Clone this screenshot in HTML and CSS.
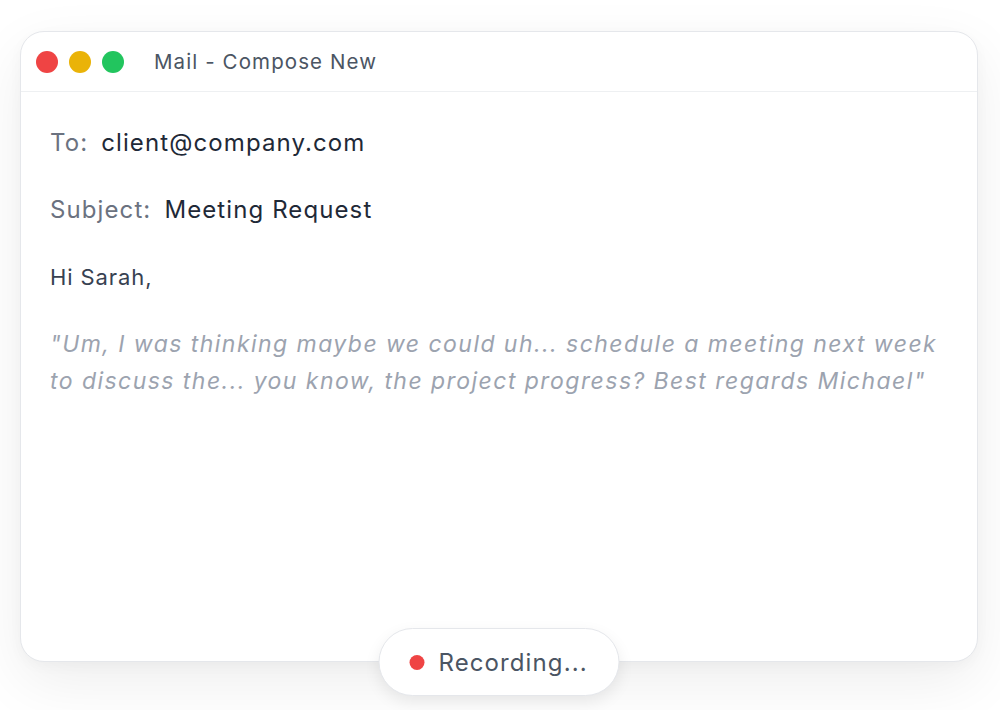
FILE: index.html
```html
<!DOCTYPE html>
<html>
<head>
<meta charset="utf-8">
<link rel="stylesheet" href="styles.css">
</head>
<body>
<div class="stage">
  <div class="window">
    <div class="titlebar">
      <div class="dots">
        <span class="dot red"></span>
        <span class="dot yellow"></span>
        <span class="dot green"></span>
      </div>
      <div class="title">Mail - Compose New</div>
    </div>
    <div class="content">
      <div class="field"><span class="label">To:</span><span class="value">client@company.com</span></div>
      <div class="field"><span class="label">Subject:</span><span class="value">Meeting Request</span></div>
      <div class="greeting">Hi Sarah,</div>
      <div class="transcript">"Um, I was thinking maybe we could uh... schedule a meeting next week to discuss the... you know, the project progress? Best regards Michael"</div>
    </div>
    <div class="recording"><span class="rec-dot"></span><span class="rec-text">Recording...</span></div>
  </div>
</div>
</body>
</html>
```
FILE: styles.css
```css
* { box-sizing: border-box; }
html, body { margin: 0; padding: 0; }
body {
  background: #ffffff;
  font-family: Inter, "Noto Sans", "Liberation Sans", sans-serif;
  width: 1000px;
  height: 710px;
  overflow: hidden;
}
.stage {
  padding: 31px 22px 0 20px;
}
.window {
  position: relative;
  width: 958px;
  height: 631px;
  background: #ffffff;
  border: 1px solid #e5e7eb;
  border-radius: 24px;
  box-shadow: 0 20px 60px rgba(0, 0, 0, 0.07), 0 4px 14px rgba(0, 0, 0, 0.03);
}
.titlebar {
  height: 60px;
  display: flex;
  align-items: center;
  padding-left: 15px;
  border-bottom: 1px solid #eef0f2;
}
.dots {
  display: flex;
  gap: 11px;
}
.dot {
  width: 22px;
  height: 22px;
  border-radius: 50%;
  display: block;
}
.red { background: #ef4444; }
.yellow { background: #eab308; }
.green { background: #22c55e; }
.title {
  margin-left: 30px;
  font-size: 20.5px;
  color: #4b5563;
  letter-spacing: 1.1px;
}
.content {
  padding: 33px 30px 0 29px;
  display: flex;
  flex-direction: column;
  gap: 31px;
}
.field {
  font-size: 24px;
  line-height: 36px;
  letter-spacing: 1.1px;
}
.label {
  color: #6b7280;
  margin-right: 13px;
}
.value {
  color: #1f2937;
}
.greeting {
  font-size: 22px;
  line-height: 35px;
  letter-spacing: 0.9px;
  color: #374151;
  margin-top: 1px;
}
.transcript {
  font-size: 23px;
  line-height: 37px;
  letter-spacing: 1.45px;
  font-style: italic;
  color: #9ca3af;
}
.recording {
  position: absolute;
  left: 50%;
  bottom: -35px;
  transform: translateX(-50%);
  width: 241px;
  height: 68px;
  background: #ffffff;
  border: 1px solid #e5e7eb;
  border-radius: 34px;
  box-shadow: 0 6px 16px rgba(0, 0, 0, 0.08);
  display: flex;
  align-items: center;
  padding-left: 30px;
}
.rec-dot {
  width: 15px;
  height: 15px;
  border-radius: 50%;
  background: #ef4444;
  margin-right: 14px;
}
.rec-text {
  font-size: 24px;
  letter-spacing: 1.1px;
  color: #4b5563;
}
```
